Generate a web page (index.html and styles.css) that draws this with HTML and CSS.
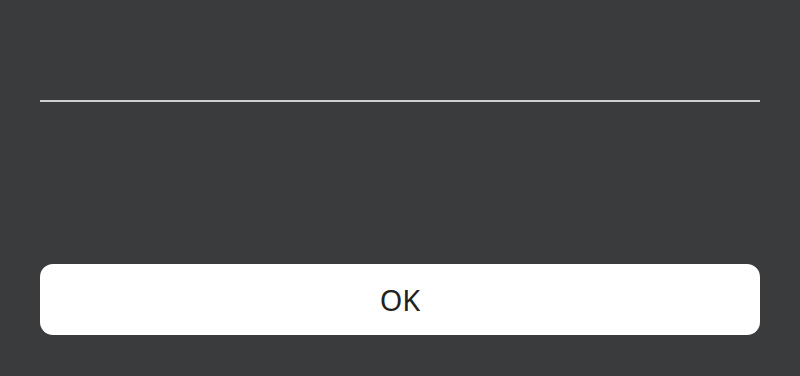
FILE: index.html
```html
<!DOCTYPE html>
<html>
<head>
<meta charset="utf-8">
<link rel="stylesheet" href="styles.css">
</head>
<body>
<div class="dialog">
  <div class="field"></div>
  <button class="ok">OK</button>
</div>
</body>
</html>
```

FILE: styles.css
```css
html, body {
  margin: 0;
  padding: 0;
  background: #3a3b3d;
  height: 100%;
}
.dialog {
  padding: 100px 40px 0;
  display: flex;
  flex-direction: column;
}
.field {
  height: 2px;
  background: #cfcfcf;
}
.ok {
  margin-top: 162px;
  height: 71px;
  border: none;
  border-radius: 13px;
  background: #ffffff;
  color: #222222;
  font-family: "Noto Sans", sans-serif;
  font-size: 29px;
  padding: 0;
  cursor: pointer;
}
```
